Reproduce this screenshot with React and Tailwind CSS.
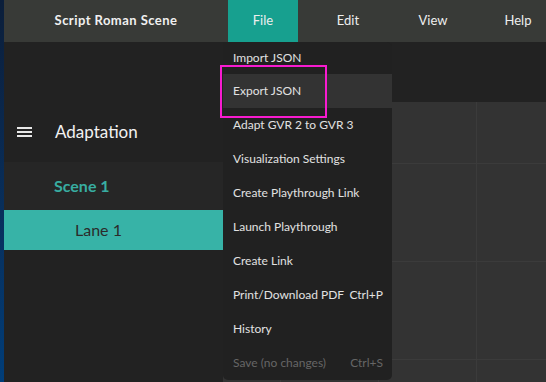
const navItems = ["File", "Edit", "View", "Help"];

const menuItems = [
  { label: "Import JSON" },
  { label: "Export JSON", active: true },
  { label: "Adapt GVR 2 to GVR 3" },
  { label: "Visualization Settings" },
  { label: "Create Playthrough Link" },
  { label: "Launch Playthrough" },
  { label: "Create Link" },
  { label: "Print/Download PDF", shortcut: "Ctrl+P" },
  { label: "History" },
  { label: "Save (no changes)", shortcut: "Ctrl+S", disabled: true },
];

const App = () => {
  return (
    <div className="flex h-[382px] w-[546px] overflow-hidden bg-[#222] font-['Lato',sans-serif]">
      {/* window edge */}
      <div className="w-1 shrink-0 bg-gradient-to-b from-[#0b1e3a] to-[#003d78]" />

      <div className="flex min-w-0 flex-1 flex-col">
        {/* Top bar */}
        <header className="flex h-[42px] shrink-0 bg-[#383a37]">
          <div className="flex w-[224px] shrink-0 items-center justify-center text-[13px] font-bold tracking-[0.035em] text-[#f0f0f0]">
            Script Roman Scene
          </div>
          <nav className="flex gap-[15px]">
            {navItems.map((item) => (
              <div
                key={item}
                className={`flex w-[70px] shrink-0 items-center justify-center text-[13px] text-[#eeeeee] ${
                  item === "File" ? "bg-[#17a08f]" : ""
                }`}
              >
                {item}
              </div>
            ))}
          </nav>
        </header>

        <div className="relative flex min-h-0 flex-1">
          {/* Sidebar */}
          <aside className="flex w-[219px] shrink-0 flex-col bg-[#222]">
            <div className="h-[60px]" />
            <div className="flex h-[60px] items-center pl-[13px]">
              <div className="flex w-[15px] flex-col gap-[2px]">
                <span className="h-[2px] bg-[#e8e8e8]" />
                <span className="h-[2px] bg-[#e8e8e8]" />
                <span className="h-[2px] bg-[#e8e8e8]" />
              </div>
              <span className="ml-[23px] text-[17px] text-[#f2f2f2]">Adaptation</span>
            </div>
            <div className="flex h-[48px] items-center bg-[#262626] pl-[50px] text-[16px] font-bold text-[#38ada1]">
              Scene 1
            </div>
            <div className="flex h-[40px] items-center bg-[#37b3a7] pl-[71px] text-[16px] text-[#2b2b2b]">
              Lane 1
            </div>
          </aside>

          {/* Canvas */}
          <main className="flex min-w-0 flex-1 flex-col">
            <div className="h-[60px] shrink-0 bg-[#222]" />
            <div className="flex-1 bg-[#333] bg-[linear-gradient(to_right,#3b3b3b_1px,transparent_1px),linear-gradient(to_bottom,#3b3b3b_1px,transparent_1px)] bg-[size:98px_98px] bg-[position:57px_61px]" />
          </main>

          {/* File menu */}
          <div className="absolute left-[219px] top-0 flex w-[169px] flex-col overflow-hidden rounded-b-[5px] rounded-tr-[5px] bg-[#212121] text-[12px]">
            {menuItems.map((item, i) => (
              <div
                key={item.label}
                className={`flex items-center justify-between whitespace-nowrap pl-[10px] pr-[9px] ${
                  i === 0 ? "h-[32px]" : "h-[34px]"
                } ${item.active ? "bg-[#333]" : ""} ${
                  item.disabled ? "text-[#666]" : "text-[#e2e2e2]"
                }`}
              >
                <span>{item.label}</span>
                {item.shortcut && <span>{item.shortcut}</span>}
              </div>
            ))}
          </div>

          {/* highlight box */}
          <div className="pointer-events-none absolute left-[216px] top-[23px] h-[53px] w-[107px] border-2 border-[#f81bd0]" />
        </div>
      </div>
    </div>
  );
};

export default App;
